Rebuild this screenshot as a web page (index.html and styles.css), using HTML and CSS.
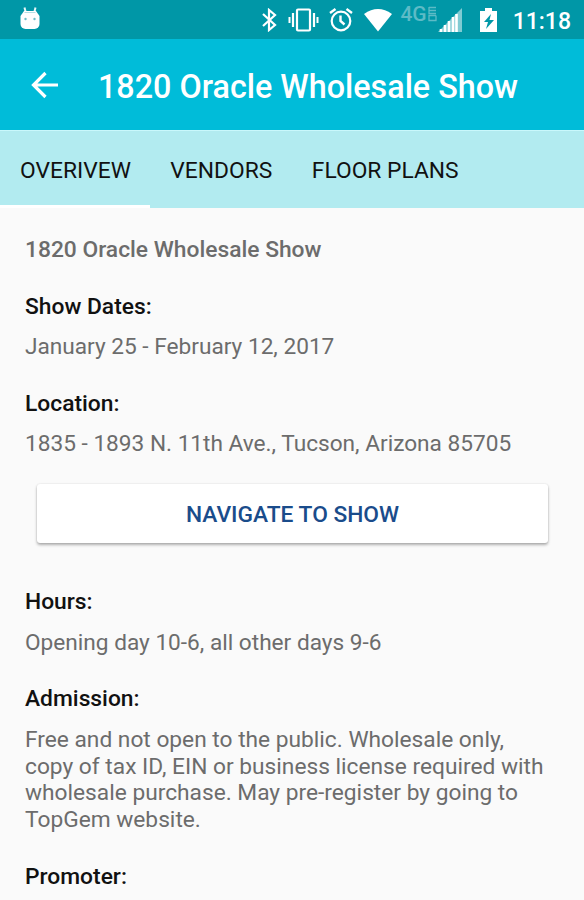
FILE: index.html
```html
<!DOCTYPE html>
<html lang="en">

<head>
    <meta charset="UTF-8">
    <meta name="viewport" content="width=device-width, initial-scale=1.0">
    <title>1820 Oracle Wholesale Show</title>
    <link rel="stylesheet" href="styles.css">
</head>

<body>
    <div class="status-bar">
        <svg class="android" width="20" height="23" viewBox="0 0 20 23">
            <path d="M4.500 0.500l1 4M15.500 0.500l-1 4" stroke="#e6f6f8" stroke-width="2" />
            <path d="M4 4h12l3.500 5v8a5 5 0 0 1-5 5h-9a5 5 0 0 1-5-5V9z" fill="#fff" />
            <path d="M4.500 5.500h11" stroke="#b5dfe4" stroke-width="1" />
            <circle cx="5.500" cy="12" r="1.200" fill="#6fbfc8" />
            <circle cx="14.500" cy="12" r="1.200" fill="#6fbfc8" />
        </svg>
        <div class="status-icons">
            <svg class="bluetooth" width="16" height="24" viewBox="0 0 16 24">
                <path d="M1 6l12 11-6 5V2l6 5L1 18" fill="none" stroke="#fff" stroke-width="2.200" />
            </svg>
            <svg class="vibrate" width="31" height="24" viewBox="0 0 31 24">
                <rect x="9" y="1.500" width="13" height="21" rx="1" fill="none" stroke="#fff" stroke-width="2.200" />
                <path d="M5 5v14M26 5v14" stroke="#fff" stroke-width="2.200" />
                <path d="M1.500 9v6M29.500 9v6" stroke="#fff" stroke-width="2" />
            </svg>
            <svg class="alarm" width="24" height="24" viewBox="0 0 24 24">
                <circle cx="12" cy="13" r="9.300" fill="none" stroke="#fff" stroke-width="2.200" />
                <path d="M1 5l5.500-4M23 5l-5.500-4M11.500 7.500V13l4 3.500" fill="none" stroke="#fff" stroke-width="2.400" />
            </svg>
            <svg class="wifi" width="30" height="24" viewBox="0 0 30 24">
                <path d="M1 6q14-10 28 0L15 23.500z" fill="#fff" />
            </svg>
            <span class="network">4G<svg width="9" height="16" viewBox="0 0 9 16">
                    <path d="M8 1.500H1M1 4.500h7M1 1v6.500h7M8 9.500H1v5h7v-5" fill="none" stroke="currentColor" stroke-width="1.300" />
                </svg></span>
            <svg class="signal" width="24" height="24" viewBox="0 0 24 24">
                <path d="M0 24L24 0v24z" fill="#fff" fill-opacity="0.5" />
                <path d="M3 24v-3M7 24v-7M11 24v-11M15 24v-15M18.500 24v-18" stroke="#fff" stroke-width="2.600" />
            </svg>
            <svg class="battery" width="17" height="24" viewBox="0 0 17 24">
                <path d="M5 0h7v3h5v21H0V3h5z" fill="#fff" />
                <path d="M11 6L4 14h4l-2 7 8-9H9.500z" fill="#0097a7" />
            </svg>
            <span class="clock">11:18</span>
        </div>
    </div>
    <header class="app-bar">
        <svg class="back" width="28" height="28" viewBox="0 0 28 28">
            <path d="M27 14H3M14.500 2L2.500 14l12 12" fill="none" stroke="#fff" stroke-width="3.200" />
        </svg>
        <h1>1820 Oracle Wholesale Show</h1>
    </header>
    <nav class="tabs">
        <a class="tab active">OVERIVEW</a>
        <a class="tab">VENDORS</a>
        <a class="tab">FLOOR PLANS</a>
    </nav>
    <main>
        <h2>1820 Oracle Wholesale Show</h2>
        <h3>Show Dates:</h3>
        <p>January 25 - February 12, 2017</p>
        <h3>Location:</h3>
        <p>1835 - 1893 N. 11th Ave., Tucson, Arizona 85705</p>
        <button class="navigate">NAVIGATE TO SHOW</button>
        <h3>Hours:</h3>
        <p>Opening day 10-6, all other days 9-6</p>
        <h3>Admission:</h3>
        <p class="admission">Free and not open to the public. Wholesale only,<br>copy of tax ID, EIN or business license required with<br>wholesale purchase. May pre-register by going to<br>TopGem website.</p>
        <h3>Promoter:</h3>
    </main>
</body>

</html>
```
FILE: styles.css
```css
* {
    box-sizing: border-box;
    margin: 0;
    padding: 0;
}

body {
    font-family: Roboto, sans-serif;
    background-color: #fafafa;
    height: 900px;
    overflow: hidden;
}

.status-bar {
    display: flex;
    justify-content: space-between;
    align-items: center;
    height: 39px;
    padding: 0 13px 0 20px;
    background-color: #0097a7;
    color: #fff;
}

.android {
    margin-top: -2px;
}

.status-icons {
    display: flex;
    align-items: center;
}

.vibrate,
.alarm,
.wifi {
    margin-left: 10px;
}

.network {
    display: flex;
    margin: -12px 0 0 7px;
    font-size: 21px;
    font-weight: 500;
    line-height: 16px;
    color: #5dbbc6;
}

.network svg {
    margin-left: 1px;
}

.signal {
    margin-left: 1px;
}

.battery {
    margin: 0 16px 0 18px;
}

.clock {
    padding-top: 3px;
    font-size: 23px;
    font-weight: 500;
}

.app-bar {
    display: flex;
    align-items: center;
    height: 91px;
    padding-left: 31px;
    background-color: #00bcd9;
    color: #fff;
}

.app-bar h1 {
    margin: 4px 0 0 39px;
    font-size: 32.3px;
    font-weight: 500;
}

.tabs {
    display: flex;
    height: 78px;
    border-top: 1px solid #c9f8fc;
    background-color: #b2ebf0;
}

.tab {
    padding: 26px 19.5px 0 20px;
    font-size: 22.8px;
    line-height: 28px;
    color: #111;
}

.tab.active {
    border-bottom: 3px solid #fff;
}

main {
    padding: 29px 25px 0;
    font-size: 22.65px;
    line-height: 26.8px;
    color: #6c6c6c;
}

h2,
h3 {
    font-size: 22.8px;
    font-weight: 500;
}

h3 {
    margin-top: 30px;
    margin-bottom: 13.6px;
    color: #111;
}

.admission {
    font-size: 22.72px;
}

.navigate {
    display: block;
    width: 511px;
    height: 59px;
    margin: 26px 0 46px 12px;
    padding-top: 2px;
    border: none;
    border-radius: 3px;
    background-color: #fff;
    box-shadow: 0 2px 3px rgba(0, 0, 0, 0.3), 0 0 2px rgba(0, 0, 0, 0.12);
    font: 500 22.75px Roboto, sans-serif;
    color: #1a4c8b;
}
```
